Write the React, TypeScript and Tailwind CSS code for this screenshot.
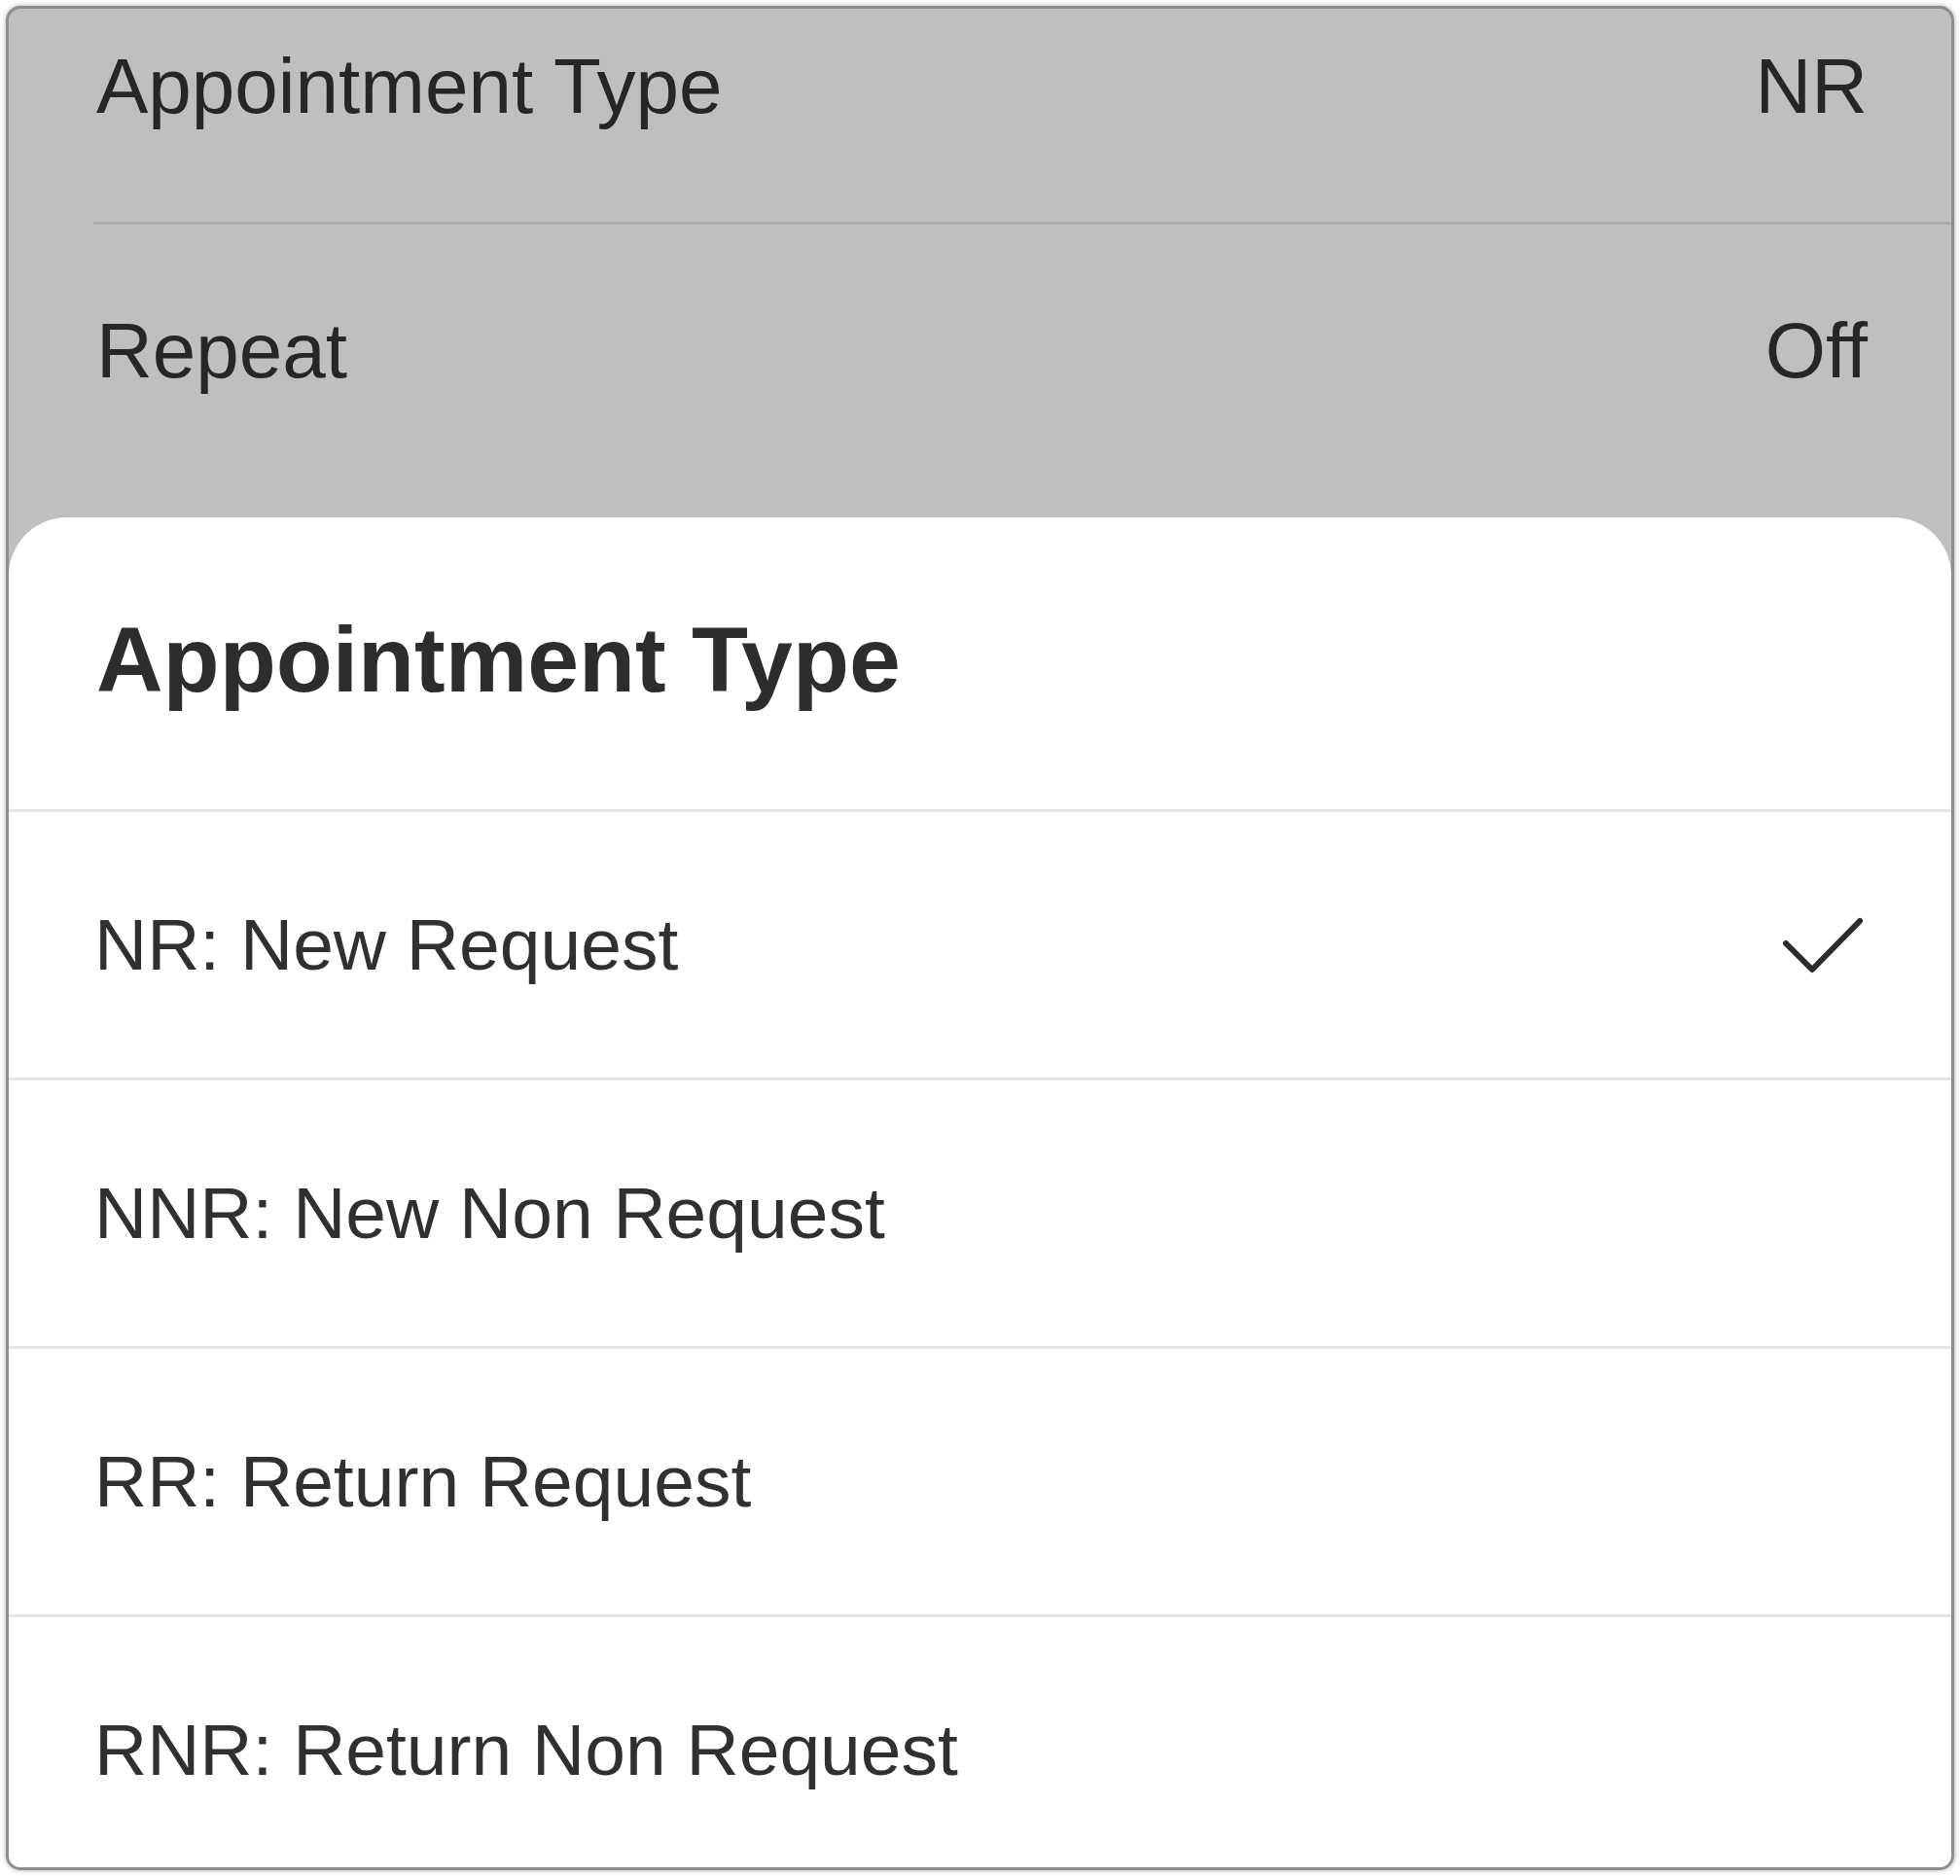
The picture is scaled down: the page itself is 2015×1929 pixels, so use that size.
// Bottom sheet picker over a dimmed settings list.

const FONT = "font-['Liberation_Sans','Noto_Sans',Arial,sans-serif]";

const OPTIONS = [
  { id: "NR", label: "NR: New Request" },
  { id: "NNR", label: "NNR: New Non Request" },
  { id: "RR", label: "RR: Return Request" },
  { id: "RNR", label: "RNR: Return Non Request" },
];

function Check() {
  return (
    <svg width="84" height="58" viewBox="0 0 84 58" fill="none" aria-hidden="true">
      <path
        d="M4 27 L31 54 L80 4"
        stroke="#2b2b2b"
        strokeWidth="6"
        strokeLinecap="round"
        strokeLinejoin="round"
      />
    </svg>
  );
}

export default function App() {
  const selected = "NR";
  return (
    <div className={`h-[1929px] w-[2015px] bg-white p-[6px] ${FONT}`}>
      <div className="flex h-full flex-col overflow-hidden rounded-[15px] border-[3px] border-[#8e8e8e] bg-[#bfbfbf] shadow-[0_0_5px_rgba(0,0,0,0.35)]">
        {/* Dimmed settings behind the sheet */}
        <div className="h-[523px] shrink-0 text-[80px] leading-none text-[#262626]">
          <div className="ml-[87px] flex h-[222px] items-center justify-between border-b-[3px] border-[#adadad] pb-[59px] pl-[3px] pr-[86px]">
            <span>Appointment Type</span>
            <span>NR</span>
          </div>
          <div className="flex h-[260px] items-center justify-between pl-[90px] pr-[86px]">
            <span>Repeat</span>
            <span>Off</span>
          </div>
        </div>

        {/* Bottom sheet */}
        <div className="flex-1 rounded-t-[60px] bg-white">
          <div className="flex h-[303px] items-center border-b-[3px] border-[#e6e6e6] pb-[8px] pl-[90px]">
            <h2 className="text-[95px] font-bold leading-none text-[#2d2d2d]">Appointment Type</h2>
          </div>
          {OPTIONS.map((o) => (
            <div
              key={o.id}
              className="flex h-[276px] items-center justify-between border-b-[3px] border-[#e6e6e6] pl-[88px] pr-[90px]"
            >
              <span className="text-[75px] leading-none text-[#303030]">{o.label}</span>
              {o.id === selected && <Check />}
            </div>
          ))}
        </div>
      </div>
    </div>
  );
}
